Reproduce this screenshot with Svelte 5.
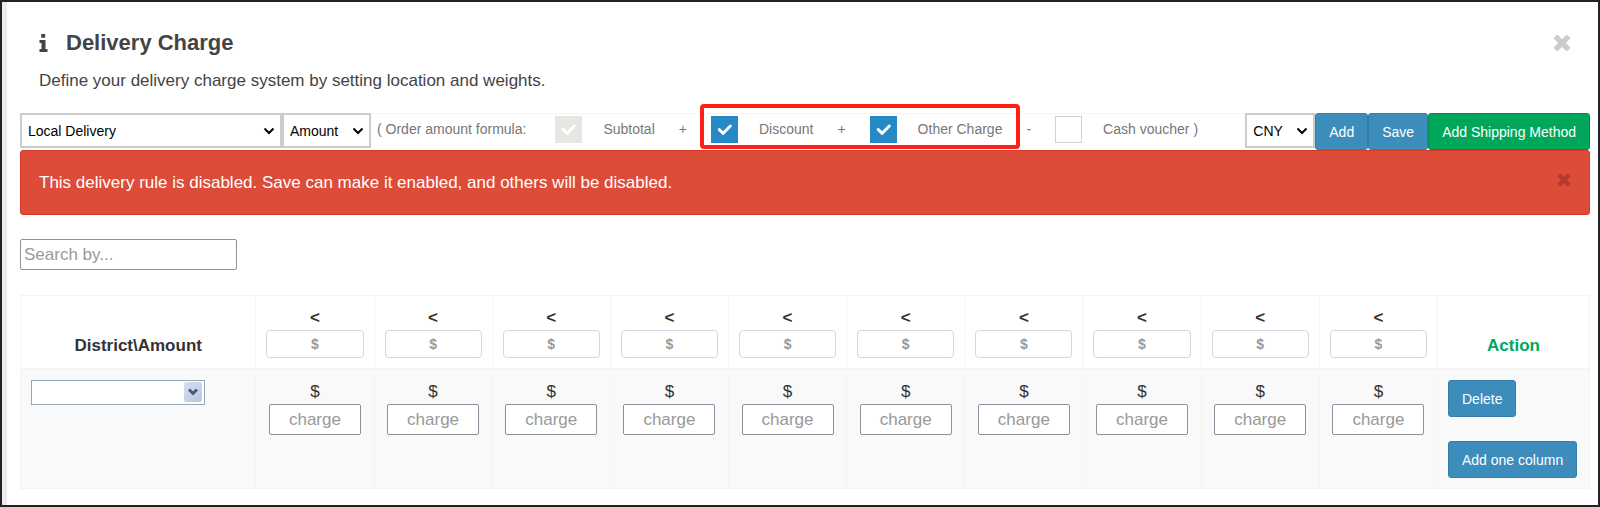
<script lang="ts">
  interface Term {
    id: string;
    label: string;
    checked: boolean;
    disabled?: boolean;
    operator?: string;
  }

  let method = $state('Local Delivery');
  let basis = $state('Amount');
  let currency = $state('CNY');
  let search = $state('');
  let district = $state('');
  let alertOpen = $state(true);
  let limits = $state<string[]>(Array(10).fill(''));
  let charges = $state<string[]>(Array(10).fill(''));

  let subtotal = $state<Term>({ id: 'subtotal', label: 'Subtotal', checked: true, disabled: true });
  let adjustments = $state<Term[]>([
    { id: 'discount', label: 'Discount', checked: true, operator: '+' },
    { id: 'other', label: 'Other Charge', checked: true },
  ]);
  let voucher = $state<Term>({ id: 'voucher', label: 'Cash voucher )', checked: false });

  function addColumn() {
    limits.push('');
    charges.push('');
  }
</script>

{#snippet cross()}
  <svg viewBox="0 0 18 18" aria-hidden="true">
    <path
      d="M4.3 1.5 L9 6.2 L13.7 1.5 L16.5 4.3 L11.8 9 L16.5 13.7 L13.7 16.5 L9 11.8 L4.3 16.5 L1.5 13.7 L6.2 9 L1.5 4.3 Z"
      fill="currentColor"
      stroke="currentColor"
      stroke-width="1.6"
      stroke-linejoin="round"
    />
  </svg>
{/snippet}

{#snippet term(t: Term)}
  <span class="term">
    <span class="check">
      <input type="checkbox" id={t.id} bind:checked={t.checked} disabled={t.disabled} />
      <svg viewBox="0 0 27 27" aria-hidden="true">
        <path d="M8.3 13.6 L12.2 17.3 L19.3 10" />
      </svg>
    </span>
    <label for={t.id}>{t.label}</label>
  </span>
{/snippet}

<div class="page">
  <main>
    <header>
      <div class="title">
        <svg class="info" viewBox="0 0 9 18" aria-hidden="true">
          <path d="M2.2 0h4v3.8h-4z M0.5 6h6v9h2v3h-8v-3h2v-6h-2z" fill="currentColor" />
        </svg>
        <h1>Delivery Charge</h1>
        <button class="close" type="button" aria-label="Close">{@render cross()}</button>
      </div>
      <p>Define your delivery charge system by setting location and weights.</p>
    </header>

    <div class="toolbar">
      <span class="select method">
        <select bind:value={method} aria-label="Delivery method">
          <option>Local Delivery</option>
        </select>
        <svg viewBox="0 0 12 8" aria-hidden="true"><path d="M1.5 1.5 L6 6 L10.5 1.5" /></svg>
      </span>
      <span class="select basis">
        <select bind:value={basis} aria-label="Charge basis">
          <option>Amount</option>
          <option>Weight</option>
        </select>
        <svg viewBox="0 0 12 8" aria-hidden="true"><path d="M1.5 1.5 L6 6 L10.5 1.5" /></svg>
      </span>

      <div class="formula">
        <span class="intro">( Order amount formula:</span>
        {@render term(subtotal)}
        <span>+</span>
        <span class="highlight">
          {#each adjustments as t (t.id)}
            {@render term(t)}
            {#if t.operator}<span>{t.operator}</span>{/if}
          {/each}
        </span>
        <span>-</span>
        {@render term(voucher)}
      </div>

      <span class="select currency">
        <select bind:value={currency} aria-label="Currency">
          <option>CNY</option>
          <option>USD</option>
        </select>
        <svg viewBox="0 0 12 8" aria-hidden="true"><path d="M1.5 1.5 L6 6 L10.5 1.5" /></svg>
      </span>
      <button class="btn" type="button">Add</button>
      <button class="btn" type="button">Save</button>
      <button class="btn green" type="button">Add Shipping Method</button>
    </div>

    {#if alertOpen}
      <div class="alert" role="alert">
        <span>This delivery rule is disabled. Save can make it enabled, and others will be disabled.</span>
        <button class="dismiss" type="button" aria-label="Dismiss" onclick={() => (alertOpen = false)}>
          {@render cross()}
        </button>
      </div>
    {/if}

    <input class="search" type="text" placeholder="Search by..." aria-label="Search" bind:value={search} />

    <table>
      <thead>
        <tr>
          <th class="district">District\Amount</th>
          {#each limits as _, i}
            <th>
              <label for="limit-{i}">&lt;</label>
              <input class="limit" id="limit-{i}" type="text" placeholder="$" bind:value={limits[i]} />
            </th>
          {/each}
          <th class="action">Action</th>
        </tr>
      </thead>
      <tbody>
        <tr>
          <td>
            <span class="combo">
              <select bind:value={district} aria-label="District">
                <option value=""></option>
              </select>
              <span class="arrow">
                <svg viewBox="0 0 12 8" aria-hidden="true"><path d="M2 1.5 L6 5.5 L10 1.5" /></svg>
              </span>
            </span>
          </td>
          {#each charges as _, i}
            <td>
              <label for="charge-{i}">$</label>
              <input class="charge" id="charge-{i}" type="text" placeholder="charge" bind:value={charges[i]} />
            </td>
          {/each}
          <td>
            <div class="actions">
              <button class="btn" type="button">Delete</button>
              <button class="btn" type="button" onclick={addColumn}>Add one column</button>
            </div>
          </td>
        </tr>
      </tbody>
    </table>
  </main>
</div>

<style>
  :global(body) {
    background: #fff;
  }

  .page,
  .page * {
    box-sizing: border-box;
  }

  .page {
    display: flex;
    min-height: 100vh;
    border: 2px solid #222124;
    font-family: 'Liberation Sans', Arial, sans-serif;
    font-size: 17px;
    line-height: 24px;
    color: #333;
  }

  input,
  select,
  button {
    margin: 0;
    font-family: inherit;
  }

  button {
    cursor: pointer;
  }

  main {
    flex: 1;
    min-width: 0;
    padding: 25px 8px 14px 13px;
    border-left: 5px solid #ececec;
  }

  header {
    padding: 0 19px 20px 19px;
    color: #444;
  }

  .title {
    display: flex;
    align-items: center;
    height: 32px;
  }

  .info {
    width: 9px;
    height: 18px;
  }

  h1 {
    flex: 1;
    margin: 0 0 0 18px;
    font-size: 22px;
    line-height: 32px;
  }

  .close,
  .dismiss {
    display: flex;
    padding: 0;
    border: 0;
    background: none;
    color: #ccc;
  }

  .close svg {
    width: 18px;
    height: 18px;
  }

  p {
    margin: 10px 0 0;
  }

  .toolbar {
    display: flex;
    align-items: flex-start;
    border-top: 1px solid #f4f4f4;
    font-size: 14px;
  }

  .select {
    position: relative;
    flex: none;
    margin-top: -1px;
  }

  .method {
    width: 262px;
  }

  .basis {
    width: 89px;
  }

  .currency {
    width: 70px;
  }

  .select select {
    display: block;
    appearance: none;
    width: 100%;
    height: 35px;
    padding: 0 24px 0 6px;
    border: 2px solid #ccc;
    border-radius: 0;
    background: #fff;
    color: #000;
    font-size: 14px;
  }

  .select svg {
    position: absolute;
    top: 14px;
    right: 7px;
    width: 12px;
    height: 8px;
    pointer-events: none;
  }

  .select path {
    fill: none;
    stroke: #000;
    stroke-width: 2;
  }

  .formula {
    display: flex;
    flex: 1;
    align-items: center;
    gap: 24px;
    height: 30px;
    padding-left: 6px;
    color: #777;
    white-space: nowrap;
  }

  .intro {
    padding-right: 5px;
  }

  .term {
    display: flex;
    align-items: center;
    gap: 21px;
  }

  .check {
    position: relative;
    width: 27px;
    height: 27px;
  }

  .check input {
    display: block;
    appearance: none;
    width: 27px;
    height: 27px;
    border: 1px solid #d3d3cd;
    background: #fff;
  }

  .check input:checked {
    border-color: #2489c5;
    background: #2489c5;
  }

  .check input:disabled {
    border-color: #e6e6e2;
    background: #e6e6e2;
  }

  .check svg {
    display: none;
    position: absolute;
    inset: 0;
    pointer-events: none;
  }

  .check input:checked + svg {
    display: block;
  }

  .check path {
    fill: none;
    stroke: #fff;
    stroke-width: 3;
    stroke-linecap: round;
    stroke-linejoin: round;
  }

  .highlight {
    display: flex;
    position: relative;
    align-items: center;
    gap: 24px;
  }

  .highlight::after {
    content: '';
    position: absolute;
    inset: -12px -18px -6px -11px;
    border: 4px solid #ff2015;
    border-radius: 4px;
    pointer-events: none;
  }

  .btn {
    flex: none;
    height: 37px;
    padding: 0 13px;
    border: 1px solid #367fa9;
    border-radius: 3px;
    background: #3c8dbc;
    color: #fff;
    font-size: 14px;
    white-space: nowrap;
  }

  .toolbar .btn {
    margin-top: -1px;
  }

  .btn.green {
    border-color: #008d4c;
    background: #00a65a;
  }

  .alert {
    display: flex;
    justify-content: space-between;
    padding: 20px 18px 19px;
    border: 1px solid #d73925;
    border-radius: 3px;
    background: #dd4b39;
    color: #fff;
  }

  .dismiss {
    align-self: flex-start;
    margin-top: 2px;
    color: #b13c2e;
  }

  .dismiss svg {
    width: 14px;
    height: 14px;
  }

  .search {
    display: block;
    width: 217px;
    height: 31px;
    margin: 24px 0 25px;
    padding: 0 3px;
    border: 1px solid #8f8f9d;
    border-radius: 2px;
    font-size: 17px;
  }

  input::placeholder {
    color: #999;
    opacity: 1;
  }

  table {
    width: 100%;
    border-collapse: collapse;
    table-layout: fixed;
  }

  th,
  td {
    padding: 10px;
    border: 1px solid #f4f4f4;
    text-align: center;
    vertical-align: top;
  }

  th {
    border-bottom-width: 2px;
    vertical-align: bottom;
  }

  tbody tr {
    background: #f9f9f9;
  }

  .district {
    width: 15%;
  }

  .action {
    width: 152px;
    color: #00a65a;
  }

  th label,
  td label {
    display: block;
  }

  .limit,
  .charge {
    display: block;
    margin: 0 auto;
    background: #fff;
    text-align: center;
  }

  .limit {
    width: 100%;
    height: 28px;
    border: 1px solid #d2d6de;
    border-radius: 4px;
    font-size: 14px;
    font-weight: bold;
  }

  .charge {
    width: 92px;
    height: 31px;
    border: 1px solid #8f8f9d;
    border-radius: 2px;
    font-size: 17px;
  }

  .combo {
    display: block;
    position: relative;
    width: 174px;
  }

  .combo select {
    display: block;
    appearance: none;
    width: 100%;
    height: 25px;
    border: 1px solid #94a6b3;
    border-radius: 0;
    background: #fff;
  }

  .arrow {
    display: flex;
    position: absolute;
    top: 2px;
    right: 3px;
    align-items: center;
    justify-content: center;
    width: 18px;
    height: 20px;
    border-radius: 2px;
    background: linear-gradient(135deg, #d6dff2, #b9c6e2);
    pointer-events: none;
  }

  .arrow svg {
    width: 12px;
    height: 8px;
  }

  .arrow path {
    fill: none;
    stroke: #4d5a70;
    stroke-width: 3;
  }

  .actions {
    display: flex;
    flex-direction: column;
    align-items: flex-start;
    gap: 24px;
  }
</style>
